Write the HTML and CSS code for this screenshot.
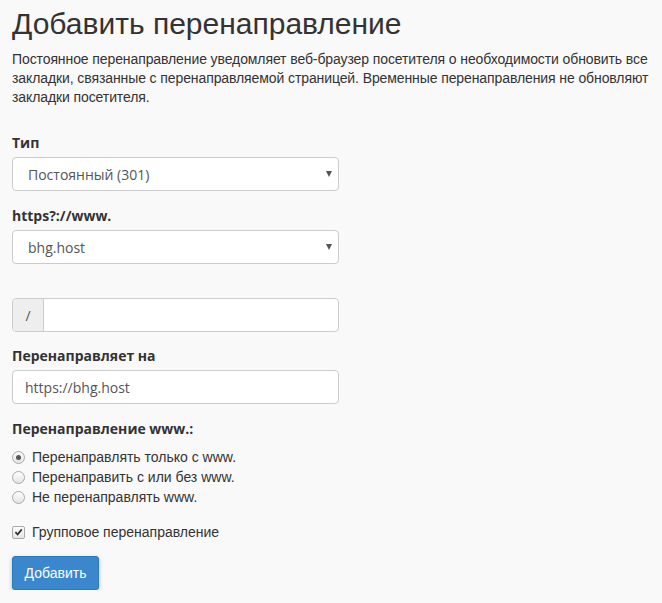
FILE: index.html
```html
<!DOCTYPE html>
<html lang="ru">
<head>
<meta charset="utf-8">
<title>Добавить перенаправление</title>
<link rel="stylesheet" href="styles.css">
</head>
<body>
<div class="page">
  <h1 class="title">Добавить перенаправление</h1>
  <p class="desc">Постоянное перенаправление уведомляет веб-браузер посетителя о необходимости обновить все закладки, связанные с перенаправляемой страницей. Временные перенаправления не обновляют закладки посетителя.</p>

  <div class="group group-first">
    <label class="label">Тип</label>
    <div class="select"><span>Постоянный (301)</span><span class="caret"></span></div>
  </div>

  <div class="group">
    <label class="label">https?://www.</label>
    <div class="select"><span>bhg.host</span><span class="caret"></span></div>
  </div>

  <div class="group group-path">
    <div class="input-group"><span class="addon">/</span><span class="input-field"></span></div>
  </div>

  <div class="group group-target">
    <label class="label">Перенаправляет на</label>
    <div class="input"><span>https://bhg.host</span></div>
  </div>

  <div class="group">
    <label class="label">Перенаправление www.:</label>
    <div class="radios">
      <div class="option"><span class="radio checked"></span><span>Перенаправлять только с www.</span></div>
      <div class="option"><span class="radio"></span><span>Перенаправить с или без www.</span></div>
      <div class="option"><span class="radio"></span><span>Не перенаправлять www.</span></div>
    </div>
  </div>

  <div class="option check-row"><span class="checkbox"><svg viewBox="0 0 12 12" width="12" height="12"><path d="M2.6 6.2 L5 8.6 L9.6 3.2" fill="none" stroke="#333" stroke-width="1.9"/></svg></span><span>Групповое перенаправление</span></div>

  <button class="btn">Добавить</button>
</div>
</body>
</html>
```

FILE: styles.css
```css
html, body {
  margin: 0;
  padding: 0;
  background: #f9f9f9;
}
.page {
  padding: 0 8px 0 12px;
  font-family: "Liberation Sans", Arial, sans-serif;
  color: #333;
  font-size: 14px;
}
.title {
  margin: 7px 0 0;
  font-size: 30px;
  font-weight: normal;
  line-height: 33px;
  color: #333;
}
.desc {
  margin: 10px 0 0;
  line-height: 19px;
  letter-spacing: -0.1px;
}
.group {
  display: flex;
  flex-direction: column;
}
.group-first { margin-top: 26px; }
.group + .group { margin-top: 15px; }
.group.group-path { margin-top: 34px; }
.group.group-target { margin-top: 14px; }
.label {
  font-family: "Open Sans", sans-serif;
  font-weight: bold;
  font-size: 14px;
  line-height: 20px;
  margin-bottom: 4px;
}
.select, .input, .input-group {
  box-sizing: border-box;
  width: 327px;
  height: 34px;
  border: 1px solid #ccc;
  border-radius: 4px;
  background: #fff;
  display: flex;
  align-items: center;
  font-family: "Open Sans", sans-serif;
  font-size: 14px;
  color: #555;
}
.select { padding: 0 6px 0 15px; justify-content: space-between; }
.input { padding: 0 12px; }
.caret {
  width: 0;
  height: 0;
  border-left: 3.5px solid transparent;
  border-right: 3.5px solid transparent;
  border-top: 6px solid #555;
}
.input-group { overflow: hidden; }
.addon {
  width: 30px;
  height: 100%;
  background: #eee;
  border-right: 1px solid #ccc;
  display: flex;
  align-items: center;
  justify-content: center;
}
.radios {
  display: flex;
  flex-direction: column;
  margin-top: 4px;
}
.option {
  display: flex;
  align-items: center;
  height: 20px;
  gap: 7px;
}
.radio {
  box-sizing: border-box;
  width: 13px;
  height: 13px;
  border-radius: 50%;
  border: 1px solid #a9a9a9;
  background: linear-gradient(#fdfdfd, #e4e4e4);
  display: flex;
  align-items: center;
  justify-content: center;
}
.radio.checked::after {
  content: "";
  width: 5px;
  height: 5px;
  border-radius: 50%;
  background: #555;
}
.check-row { margin-top: 15px; }
.checkbox {
  box-sizing: border-box;
  width: 13px;
  height: 13px;
  border: 1px solid #a9a9a9;
  border-radius: 2px;
  background: linear-gradient(#fdfdfd, #e4e4e4);
  display: flex;
  align-items: center;
  justify-content: center;
}
.checkbox svg { display: block; }
.btn {
  margin-top: 14px;
  width: 87px;
  height: 34px;
  background: #3a87cd;
  border: 1px solid #2e78be;
  border-radius: 3px;
  color: #fff;
  font-family: "Liberation Sans", Arial, sans-serif;
  font-size: 14px;
  box-shadow: 0 2px 4px rgba(0,0,0,0.25);
  padding: 0;
}
```
